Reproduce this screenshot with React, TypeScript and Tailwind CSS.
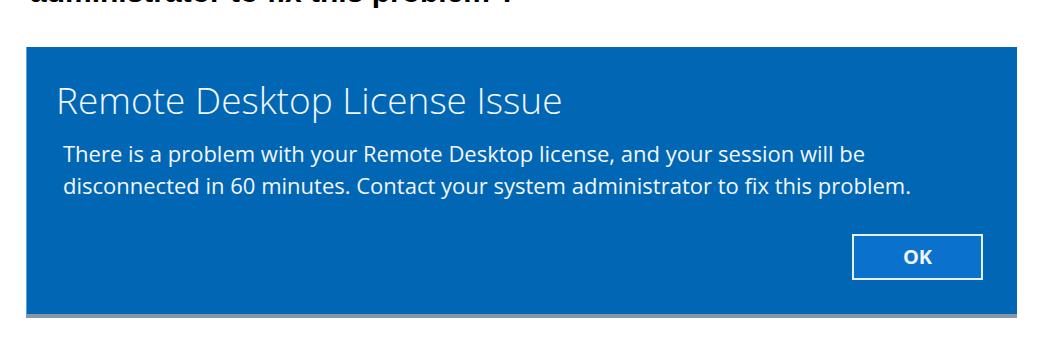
import React from 'react';

const App: React.FC = () => {
  return (
    <div className="w-[1059px] h-[353px] bg-white overflow-hidden">
      {/* Cropped line of the article above the dialog */}
      <div className="h-[47px] overflow-hidden">
        <p
          className="pl-[30px] -mt-[23px] text-[30px] leading-none font-bold text-black whitespace-nowrap"
          style={{ fontFamily: '"Liberation Sans", Arial, sans-serif' }}
        >
          administrator to fix this problem ?
        </p>
      </div>

      {/* Dialog */}
      <div
        className="ml-[26px] w-[991px] h-[271px] bg-[#0166b3] border-b-[4px] border-[#8797a6] border-l border-l-[#5fa3d6] flex flex-col text-[#f2f7fc]"
        style={{ fontFamily: '"Open Sans", "Noto Sans", sans-serif' }}
      >
        <h1 className="pl-[29px] pt-[31px] text-[37px] font-light leading-[44px] whitespace-nowrap">
          Remote Desktop License Issue
        </h1>
        <p className="pl-[36px] pt-[15px] text-[22px] leading-[32px] whitespace-nowrap">
          There is a problem with your Remote Desktop license, and your session will be
          <br />
          disconnected in 60 minutes. Contact your system administrator to fix this problem.
        </p>
        <div className="flex justify-end pr-[34px] pt-[33px]">
          <button className="w-[131px] h-[46px] border-2 border-[#e6f0fa] bg-[#0a72cd] text-[20px] font-bold text-[#eef5fc]">
            OK
          </button>
        </div>
      </div>
    </div>
  );
};

export default App;
